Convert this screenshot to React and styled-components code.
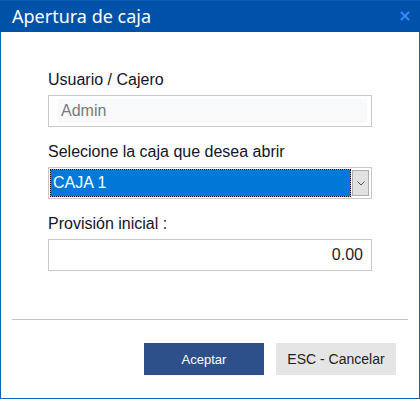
import React from 'react';
import styled, { createGlobalStyle } from 'styled-components';

const GlobalStyle = createGlobalStyle`
    html, body {
        margin: 0;
        padding: 0;
        background: #ffffff;
    }
`;

const Window = styled.div`
    width: 420px;
    height: 399px;
    box-sizing: border-box;
    border: 1px solid #0a67b8;
    border-top: none;
    display: flex;
    flex-direction: column;
    background: #ffffff;
`;

const Header = styled.div`
    height: 32px;
    flex-shrink: 0;
    margin: 0 -1px;
    background: #0051a8;
    border-top: 1px solid #0a5fb4;
    box-sizing: border-box;
    display: flex;
    align-items: center;
    justify-content: space-between;
    padding: 0 10px 0 12px;
`;

const Title = styled.span`
    font-family: 'Noto Sans', 'Open Sans', sans-serif;
    font-size: 18px;
    color: #ffffff;
    line-height: 24px;
    margin-top: -2px;
`;

const Close = styled.svg`
    width: 10px;
    height: 10px;
    margin-top: -1px;
`;

const Body = styled.div`
    padding: 39px 47px 0 47px;
    display: flex;
    flex-direction: column;
`;

const Label = styled.label`
    font-family: 'Liberation Sans', Arial, sans-serif;
    font-size: 16px;
    line-height: 18px;
    color: #14142b;
    margin-bottom: 6px;
    margin-top: ${({ $first }) => ($first ? '0' : '16px')};
`;

const InputBox = styled.div`
    height: 32px;
    box-sizing: border-box;
    border: 1px solid #c8c8c8;
    background: #ffffff;
    display: flex;
    align-items: stretch;
    padding: ${({ $readonly }) => ($readonly ? '3px 4px 3px 9px' : '0 8px')};
`;

const InputValue = styled.div`
    flex: 1;
    display: flex;
    align-items: center;
    justify-content: ${({ $align }) => ($align === 'right' ? 'flex-end' : 'flex-start')};
    background: ${({ $readonly }) => ($readonly ? '#f7f9fb' : '#ffffff')};
    padding-left: ${({ $readonly }) => ($readonly ? '3px' : '0')};
    font-family: 'Liberation Sans', Arial, sans-serif;
    font-size: 16px;
    color: ${({ $readonly }) => ($readonly ? '#7a7a7a' : '#1e1e1e')};
`;

const SelectBox = styled.div`
    height: 32px;
    box-sizing: border-box;
    border: 1px solid #c8c8c8;
    padding: 1px;
    display: flex;
    gap: 1px;
`;

const FocusRing = styled.div`
    flex: 1;
    background: #f08a00;
    display: flex;
`;

const Selected = styled.div`
    flex: 1;
    border: 1px dotted #111111;
    background: #0078d7;
    background-clip: padding-box;
    display: flex;
    align-items: center;
    padding-left: 2px;
    font-family: 'Liberation Sans', Arial, sans-serif;
    font-size: 16px;
    color: #ffffff;
`;

const DropButton = styled.div`
    width: 17px;
    box-sizing: border-box;
    margin: 1px 1px 1px 0;
    border: 1px solid #adadad;
    background: #e1e1e1;
    display: flex;
    align-items: center;
    justify-content: center;
`;

const Separator = styled.div`
    height: 1px;
    background: #c3c3c3;
    margin: 48px 11px 0 11px;
`;

const Footer = styled.div`
    display: flex;
    justify-content: flex-end;
    gap: 12px;
    padding: 23px 23px 0 0;
`;

const Button = styled.button`
    width: 120px;
    height: 32px;
    border: none;
    padding: 0;
    font-family: 'Liberation Sans', Arial, sans-serif;
    font-size: ${({ $variant }) => ($variant === 'primary' ? '13px' : '14px')};
    background: ${({ $variant }) => ($variant === 'primary' ? '#2d4f8a' : '#e5e5e5')};
    color: ${({ $variant }) => ($variant === 'primary' ? '#ffffff' : '#222222')};
`;

const App = () => {
    return (
        <>
            <GlobalStyle />
            <Window>
                <Header>
                    <Title>Apertura de caja</Title>
                    <Close viewBox="0 0 10 10">
                        <path d="M1 1 L9 9 M9 1 L1 9" stroke="#2f8bff" strokeWidth="2.2" />
                    </Close>
                </Header>
                <Body>
                    <Label $first>Usuario / Cajero</Label>
                    <InputBox $readonly>
                        <InputValue $readonly>Admin</InputValue>
                    </InputBox>

                    <Label>Selecione la caja que desea abrir</Label>
                    <SelectBox>
                        <FocusRing>
                            <Selected>CAJA 1</Selected>
                        </FocusRing>
                        <DropButton>
                            <svg width="8" height="5" viewBox="0 0 8 5">
                                <path d="M0.5 0.5 L4 4 L7.5 0.5" fill="none" stroke="#555555" strokeWidth="1" />
                            </svg>
                        </DropButton>
                    </SelectBox>

                    <Label>Provisión inicial :</Label>
                    <InputBox>
                        <InputValue $align="right">0.00</InputValue>
                    </InputBox>
                </Body>
                <Separator />
                <Footer>
                    <Button $variant="primary">Aceptar</Button>
                    <Button $variant="secondary">ESC - Cancelar</Button>
                </Footer>
            </Window>
        </>
    );
};

export default App;
